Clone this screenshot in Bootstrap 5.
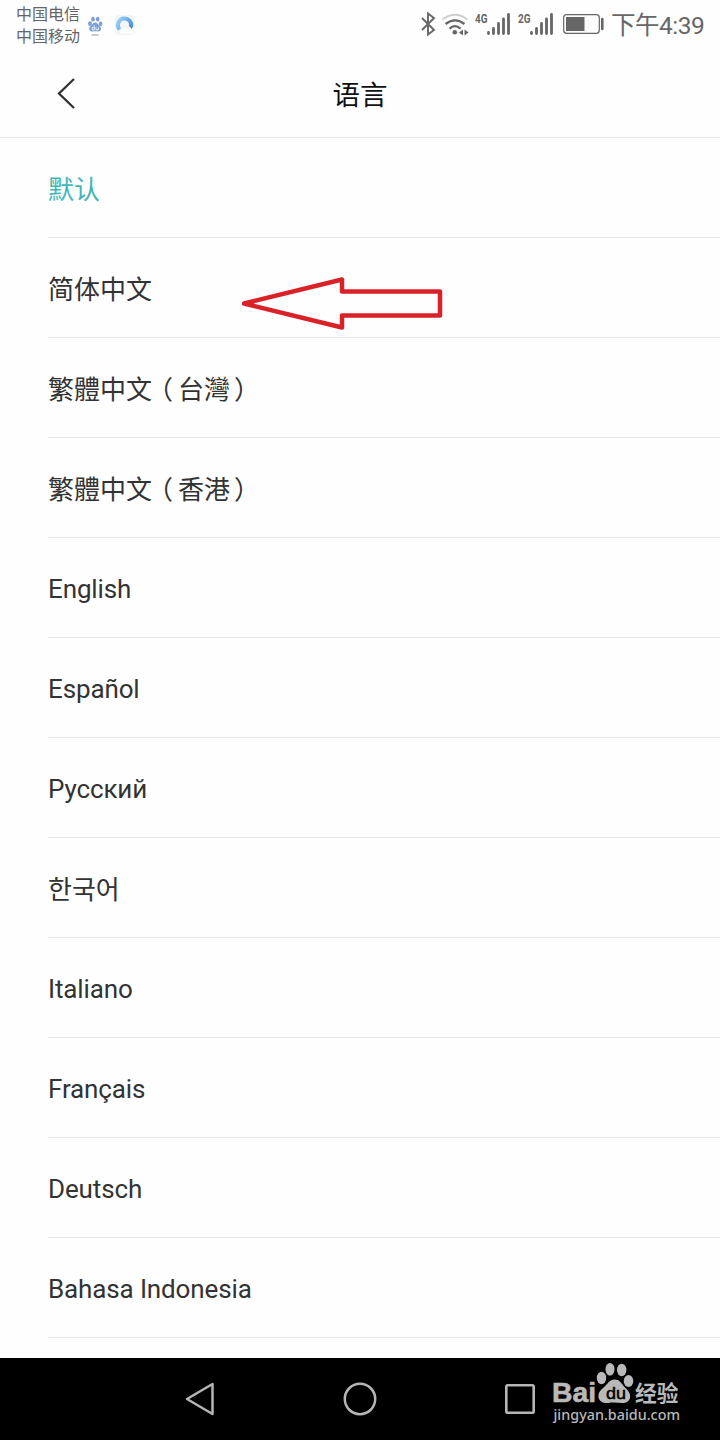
<!DOCTYPE html>
<html lang="zh-CN">
<head>
<meta charset="utf-8">
<meta name="viewport" content="width=device-width, initial-scale=1">
<title>语言</title>
<link href="https://cdn.jsdelivr.net/npm/bootstrap@5.3.0/dist/css/bootstrap.min.css" rel="stylesheet">
<style>
  body { font-family: Roboto, "Noto Sans CJK SC", sans-serif; background: #fefefe; color: #333; }
  .screen { width: 720px; height: 1440px; overflow: hidden; }
  .status { height: 50px; padding-left: 16px; padding-right: 16px; color: #666; }
  .carriers { font-size: 16px; line-height: 22px; width: 64px; margin-top: 1px; }
  .clock { font-size: 24.500px; line-height: 48px; width: 93px; margin-left: 7px; margin-top: 1px; letter-spacing: -.5px; }
  .titlebar { height: 88px; border-bottom: 1px solid #e6e6e6; padding-left: 54px; padding-right: 54px; }
  .titlebar h1 { font-size: 27.5px; line-height: 40px; color: #111; padding-top: 5px; }
  .languages { height: 1220px; overflow: hidden; }
  .languages .list-group-item { height: 100px; flex: none; margin-left: 48px; padding: 4px 0 0; border-color: #e6e6e6; border-width: 0 0 1px !important; background: none; color: #333; font-size: 26px; line-height: 40px; }
  .languages .latin { padding-top: 2px; letter-spacing: -.13px; }
  .languages .chosen { color: #41b6b8; }
  .tc { font-family: Roboto, "Noto Sans CJK TC", sans-serif; }
  .kr { font-family: Roboto, "Noto Sans CJK KR", sans-serif; }
  .open-mark { margin-left: -5px; margin-right: 5px; }
  .close-mark { margin-left: 4px; }
  .pointer { left: 194px; top: 38px; }
  .keys { height: 82px; background: #000; }
  .keys .key { width: 160px; }
  .brand { left: 545px; top: 0; }
  .spacer { width: 26px; }
  svg { display: block; flex: none; }
</style>
</head>
<body>
<div class="screen d-flex flex-column">
  <header class="status d-flex align-items-center justify-content-between flex-shrink-0">
    <div class="d-flex align-items-center">
      <div class="carriers text-nowrap">中国电信<br>中国移动</div>
      <svg width="60" height="50" viewBox="80 0 60 50">
        <g fill="#7d9fd6">
          <ellipse cx="90" cy="23.5" rx="1.9" ry="2.5"/><ellipse cx="93" cy="19.2" rx="1.8" ry="2.4"/>
          <ellipse cx="97.7" cy="19.2" rx="1.8" ry="2.4"/><ellipse cx="100.6" cy="23.8" rx="1.8" ry="2.4"/>
          <path d="M95.3 22.5c2 0 2.8 2 4.4 3.4 2 1.800 1.700 5.400-1.200 5.500-2 0-4.400-.4-6.400 0-3.200.2-3.700-3.500-1.500-5.400 1.700-1.500 2.400-3.500 4.700-3.500z"/>
        </g>
        <path d="M94.300 25.500v4.400h-2.100v-2.500h2.100M96 27.300v2.600h2.300v-2.600" fill="none" stroke="#fff" stroke-width=".8"/>
        <path d="M91.500 35h7" stroke="#a9a9a9" stroke-width="1.200"/>
        <rect x="115" y="15" width="20" height="20" rx="4" fill="#f3f6f9"/>
        <path d="M119.500 29.500A6.700 6.700 0 1 1 131 27" fill="none" stroke="url(#ring)" stroke-width="4"/>
        <path d="M120 33.500c1-5 5-7 8.500-4.200 3 .2 5 2 5 4.200z" fill="#fff"/>
        <path d="M128.500 24.500l3 4.500 1.500-3z" fill="#568bc4"/>
        <defs><linearGradient id="ring" x1="0" y1="0" x2="1" y2=".5"><stop stop-color="#9ed2f2"/><stop offset="1" stop-color="#5799dc"/></linearGradient></defs>
      </svg>
    </div>
    <div class="d-flex align-items-center">
      <svg width="190" height="50" viewBox="414 0 190 50" fill="none" stroke="#666">
        <path d="M422 18l12 12-6 4.500V13.500l6 4.500-12 12" stroke-width="1.900"/>
        <path d="M442.500 19.500Q455 10 467.500 19.500" stroke="#cfcfcf" stroke-width="2"/>
        <path d="M445.500 24Q455 16.800 464.500 24M449.500 28.600Q455 23.800 460.500 28.600" stroke-width="2.200"/>
        <circle cx="454.800" cy="32.200" r="2.300" fill="#666" stroke="none"/>
        <path d="M459 32.500l4-3v6zM468.500 32.500l-4-3v6z" fill="#666" stroke="none"/>
        <g stroke="none" fill="#666" font-family="Roboto" font-weight="700" font-size="13">
          <text x="475" y="22.500" textLength="12.500" lengthAdjust="spacingAndGlyphs">4G</text>
          <text x="518" y="22.500" textLength="12.500" lengthAdjust="spacingAndGlyphs">2G</text>
        </g>
        <path d="M488.500 32.500v1M493.500 28.500v5M498.500 23.500v10M503.500 19v14.500M508.500 14.500v19M531.500 32.500v1M536.500 28.500v5M541.500 23.500v10M546.500 19v14.500M551.500 14.500v19" stroke-width="2.800" stroke-linecap="round"/>
        <rect x="563.700" y="14.700" width="35.600" height="18.600" rx="3" stroke-width="1.200"/>
        <rect x="566" y="17" width="18.500" height="14" fill="#666" stroke="none"/>
        <path d="M602.300 19v10" stroke-width="2.600" stroke-linecap="round"/>
      </svg>
      <div class="clock text-nowrap">下午4:39</div>
    </div>
  </header>

  <nav class="titlebar d-flex align-items-center justify-content-between flex-shrink-0">
    <svg width="26" height="36" viewBox="0 0 26 36"><path d="M20 3L5 17.500 20 32" fill="none" stroke="#333" stroke-width="2.300"/></svg>
    <h1 class="mb-0 fw-normal">语言</h1>
    <span class="spacer"></span>
  </nav>

  <main class="languages flex-shrink-0">
    <div class="list-group list-group-flush">
      <div class="list-group-item d-flex align-items-center chosen"><span>默认</span></div>
      <div class="list-group-item d-flex align-items-center position-relative"><span>简体中文</span>
        <svg class="pointer position-absolute" width="202" height="56" viewBox="242 276 202 56"><path d="M244 303.500L342 279.500V291.500H440V315.500H342V327.500Z" fill="none" stroke="#db2128" stroke-width="4.500" stroke-linejoin="round"/></svg>
      </div>
      <div class="list-group-item d-flex align-items-center tc" lang="zh-TW"><span>繁體中文<span class="open-mark">（</span>台灣<span class="close-mark">）</span></span></div>
      <div class="list-group-item d-flex align-items-center tc" lang="zh-TW"><span>繁體中文<span class="open-mark">（</span>香港<span class="close-mark">）</span></span></div>
      <div class="list-group-item d-flex align-items-center latin"><span>English</span></div>
      <div class="list-group-item d-flex align-items-center latin"><span>Español</span></div>
      <div class="list-group-item d-flex align-items-center latin"><span>Русский</span></div>
      <div class="list-group-item d-flex align-items-center kr" lang="ko"><span>한국어</span></div>
      <div class="list-group-item d-flex align-items-center latin"><span>Italiano</span></div>
      <div class="list-group-item d-flex align-items-center latin"><span>Français</span></div>
      <div class="list-group-item d-flex align-items-center latin"><span>Deutsch</span></div>
      <div class="list-group-item d-flex align-items-center latin"><span>Bahasa Indonesia</span></div>
    </div>
  </main>

  <footer class="keys d-flex justify-content-center align-items-center position-relative flex-shrink-0">
    <div class="key d-flex justify-content-center"><svg width="34" height="36" viewBox="0 0 34 36"><path d="M4 18L29.500 3V33Z" fill="none" stroke="#b5b5b5" stroke-width="2.500" stroke-linejoin="round"/></svg></div>
    <div class="key d-flex justify-content-center"><svg width="36" height="36" viewBox="0 0 36 36"><circle cx="18" cy="18" r="15.200" fill="none" stroke="#b5b5b5" stroke-width="2.500"/></svg></div>
    <div class="key d-flex justify-content-center"><svg width="36" height="36" viewBox="0 0 36 36"><rect x="4.300" y="4.300" width="27.400" height="27.400" rx="1.500" fill="none" stroke="#b5b5b5" stroke-width="2.600"/></svg></div>
    <svg class="brand position-absolute" width="145" height="82" viewBox="545 1358 145 82" fill="#b9b9b9">
      <text x="552" y="1402" font-family="Liberation Sans" font-weight="700" font-size="28.500" textLength="44" lengthAdjust="spacingAndGlyphs" stroke="#b9b9b9" stroke-width=".6">Bai</text>
      <ellipse cx="601.500" cy="1378" rx="4.700" ry="6.200"/><ellipse cx="610" cy="1369.300" rx="4.500" ry="6.300"/>
      <ellipse cx="621.700" cy="1370" rx="4.700" ry="6.200"/><ellipse cx="628.500" cy="1381" rx="4.800" ry="6"/>
      <path d="M615 1379.500c5 0 7 5 10.500 8.500 8 7 5 15-3 15-5 0-9-1-14 0-11 1-13-9-6-14.500 5-4 6.500-9 12.500-9z"/>
      <text x="606" y="1399" fill="#000" font-family="Liberation Sans" font-size="17" textLength="20" lengthAdjust="spacingAndGlyphs" stroke="#000" stroke-width=".5">du</text>
      <text x="635" y="1400.500" font-family="Noto Sans CJK SC" font-weight="700" font-size="22" textLength="43.500" lengthAdjust="spacingAndGlyphs">经验</text>
      <text x="553.500" y="1419.500" font-family="Noto Sans" font-size="15" font-weight="500" textLength="126.500" lengthAdjust="spacingAndGlyphs">jingyan.baidu.com</text>
    </svg>
  </footer>
</div>
<script src="https://cdn.jsdelivr.net/npm/bootstrap@5.3.0/dist/js/bootstrap.bundle.min.js"></script>
</body>
</html>
